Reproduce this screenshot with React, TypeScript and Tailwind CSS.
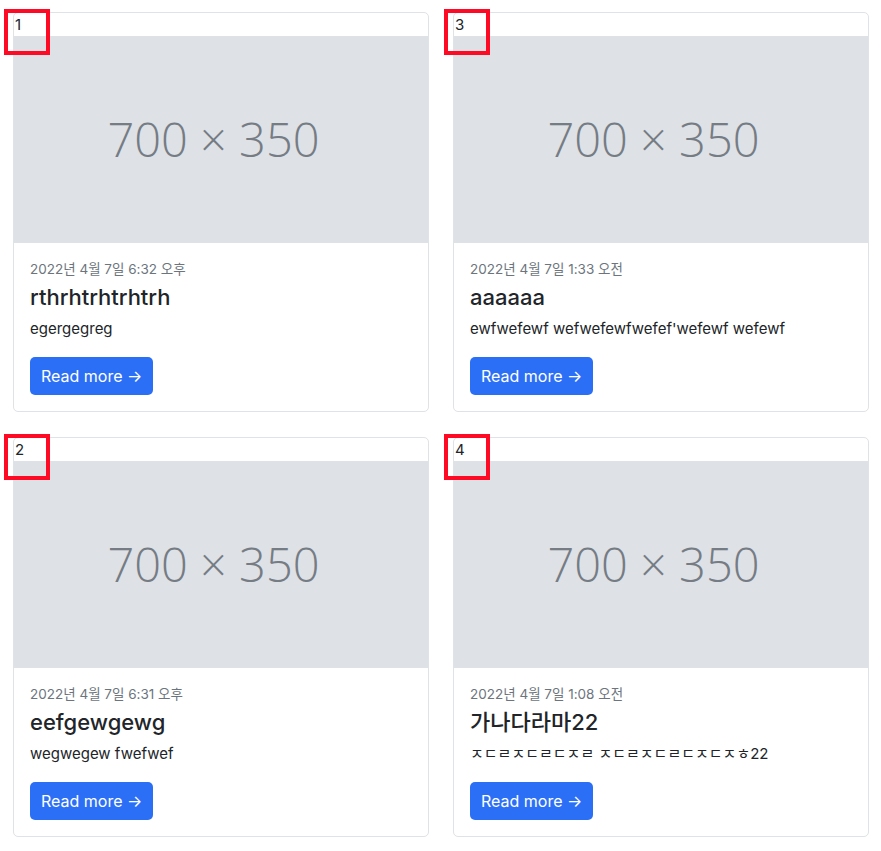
const posts = [
  { id: 1, date: '2022년 4월 7일 6:32 오후', title: 'rthrhtrhtrhtrh', body: 'egergegreg' },
  { id: 3, date: '2022년 4월 7일 1:33 오전', title: 'aaaaaa', body: "ewfwefewf wefwefewfwefef'wefewf wefewf" },
  { id: 2, date: '2022년 4월 7일 6:31 오후', title: 'eefgewgewg', body: 'wegwegew fwefwef' },
  { id: 4, date: '2022년 4월 7일 1:08 오전', title: '가나다라마22', body: 'ㅈㄷㄹㅈㄷㄹㄷㅈㄹ ㅈㄷㄹㅈㄷㄹㄷㅈㄷㅈㅎ22' },
];

const font = { fontFamily: 'Inter, "Noto Sans CJK KR", sans-serif' };

export default function App() {
  return (
    <div className="bg-white min-h-[851px] pt-[12px] pl-[13px] pr-[12px] text-[#212529]" style={font}>
      <div className="grid grid-cols-2 gap-x-[24px] gap-y-[25px]">
        {posts.map((p) => (
          <div key={p.id} className="relative border border-[#dfe2e6] rounded-[5px] bg-white">
            {/* marker */}
            <div className="absolute -left-[10px] -top-[4px] w-[46px] h-[46px] border-[4px] border-[#ff0a24]" />
            <div className="h-[23px] text-[15px] leading-[23px] pl-[1px]">{p.id}</div>
            <div className="h-[207px] bg-[#dee1e6] flex items-center justify-center pr-[15px]">
              <span className="text-[47px] font-light text-[#757c84]" style={{ fontFamily: '"Open Sans", sans-serif' }}>
                700 × 350
              </span>
            </div>
            <div className="p-4">
              <div className="text-[13.5px] leading-[21px] text-[#6c757d] mb-[5px]">{p.date}</div>
              <h5 className="text-[22px] leading-[24px] font-medium mb-[8px]">{p.title}</h5>
              <p className="text-[15px] leading-[24px] mb-4">{p.body}</p>
              <button className="h-[38px] px-[11px] rounded-[5px] bg-[#2b6ff6] text-white text-[16px]">
                Read more →
              </button>
            </div>
          </div>
        ))}
      </div>
    </div>
  );
}
